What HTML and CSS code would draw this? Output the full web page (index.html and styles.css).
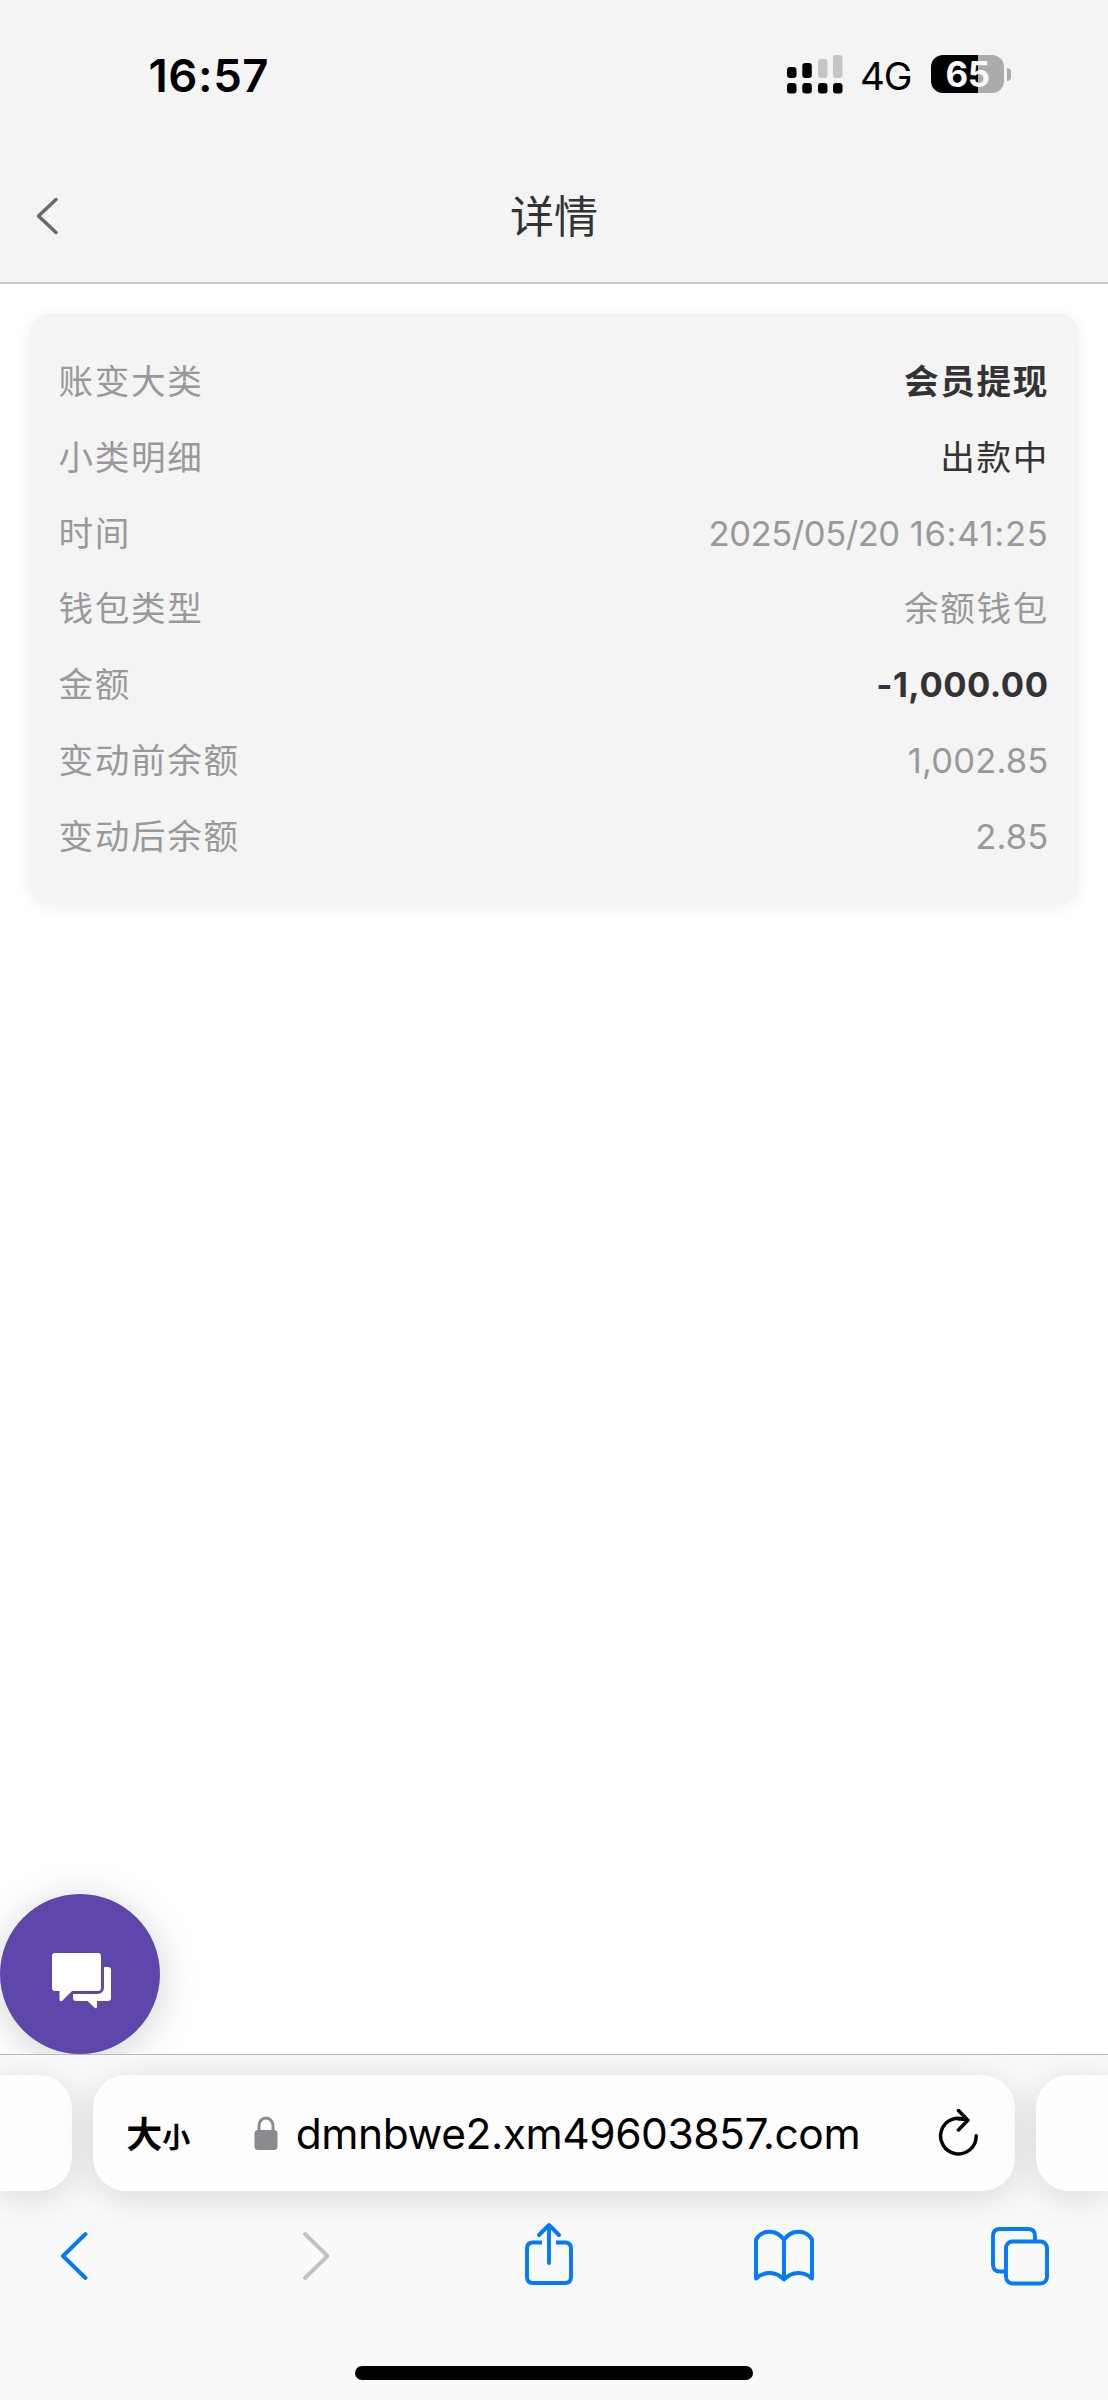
FILE: index.html
```html
<!DOCTYPE html>
<html lang="zh-CN">
<head>
<meta charset="utf-8">
<title>详情</title>
<link rel="stylesheet" href="styles.css">
</head>
<body>
<div class="status">
  <span class="time">16:57</span>
  <div class="status-right">
    <svg class="signal" width="58" height="40" viewBox="0 0 58 40">
      <g fill="#c5c5c5"><rect x="32" y="5" width="9.5" height="19" rx="3"/><rect x="47" y="1" width="9.5" height="23" rx="3"/></g>
      <rect x="1" y="13" width="9.5" height="11" rx="3"/><rect x="16.3" y="9" width="9.5" height="15" rx="3"/>
      <rect x="1" y="29" width="9.5" height="10.5" rx="3"/><rect x="16.3" y="29" width="9.5" height="10.5" rx="3"/><rect x="32" y="29" width="9.5" height="10.5" rx="3"/><rect x="47" y="29" width="9.5" height="10.5" rx="3"/>
    </svg>
    <span class="net">4G</span>
    <div class="battery">65</div>
    <div class="nub"></div>
  </div>
</div>
<header class="nav">
  <svg class="nav-back" width="24" height="38" viewBox="0 0 24 38"><path d="M21 2.500 3.500 19 21 35.500" fill="none" stroke="#6a6a6a" stroke-width="3.500" stroke-linecap="round" stroke-linejoin="round"/></svg>
  <h1>详情</h1>
</header>
<main>
  <dl class="card">
    <div class="row"><dt>账变大类</dt><dd class="dark bold">会员提现</dd></div>
    <div class="row"><dt>小类明细</dt><dd class="dark">出款中</dd></div>
    <div class="row"><dt>时间</dt><dd class="num"><span class="date">2025/05/20</span> <span class="clock">16:41:25</span></dd></div>
    <div class="row"><dt>钱包类型</dt><dd>余额钱包</dd></div>
    <div class="row"><dt>金额</dt><dd class="num dark bold">-1,000.00</dd></div>
    <div class="row"><dt>变动前余额</dt><dd class="num">1,002.85</dd></div>
    <div class="row"><dt>变动后余额</dt><dd class="num">2.85</dd></div>
  </dl>
  <div class="chat">
    <svg width="60" height="56" viewBox="0 0 60 56" fill="#fff"><path d="M4 0h43q3 0 3 3v32q0 3-3 3H21L11.500 47.500Q9 49 8.500 47V38H4q-3 0-3-3V3q0-3 3-3z"/><path d="M54 14h3q3 0 3 3v28q0 3-3 3H46v6q-.5 2-2 1l-7.500-7H25q-3 0-3-3v-4h24q7 0 7-7V15q0-1 1-1z"/></svg>
  </div>
</main>
<footer class="browser">
  <div class="tabs">
    <div class="pill side"></div>
    <div class="pill address">
      <span class="size"><span class="big">大</span><span class="small">小</span></span>
      <svg class="lock" width="24" height="34" viewBox="0 0 24 34"><path d="M5 16V9.500a7 7.500 0 0 1 14 0V16" fill="none" stroke="#8b8a8f" stroke-width="3"/><rect x=".5" y="14" width="23" height="20" rx="3.500" fill="#8b8a8f"/></svg>
      <span class="url">dmnbwe2.xm49603857.com</span>
      <svg class="reload" width="42" height="50" viewBox="0 0 42 50" fill="none" stroke="#000" stroke-width="3.500" stroke-linecap="round" stroke-linejoin="round"><path d="M38.200 28.800A17.800 17.800 0 1 1 29 13.500M20.700 12Q25 11.700 30 13.300M20.500 3.500 29.800 13.300 20.500 23"/></svg>
    </div>
    <div class="pill side"></div>
  </div>
  <div class="tools">
    <svg width="28" height="64" viewBox="0 0 28 64"><path d="M25.500 12 3 34l22.500 22" class="line"/></svg>
    <svg width="28" height="64" viewBox="0 0 28 64"><path d="M3 12l22.500 22L3 56" class="line off"/></svg>
    <svg width="50" height="64" viewBox="0 0 50 64"><path d="M18 20.500H9q-6 0-6 6V55q0 6 6 6h32q6 0 6-6V26.500q0-6-6-6h-9" class="line butt"/><path d="M25 41V3.500M15 13 25 3l10 10" class="line"/></svg>
    <svg width="62" height="64" viewBox="0 0 62 64"><path d="M31 56V18C24 7 9 7 3 17.500V56.500C11 49 23 49 31 57.500 39 49 51 49 59 56.500V17.500C53 7 38 7 31 18" class="line"/></svg>
    <svg width="60" height="64" viewBox="0 0 60 64"><path d="M15 49.500H10q-7 0-7-7V14q0-7 7-7h28q7 0 7 7v5.500" class="line butt"/><rect x="16" y="19.500" width="41" height="42" rx="6.500" class="line"/></svg>
  </div>
  <div class="home"></div>
</footer>
</body>
</html>
```
FILE: styles.css
```css
* { box-sizing: border-box; }
body {
  margin: 0;
  width: 1108px;
  height: 2400px;
  display: flex;
  flex-direction: column;
  overflow: hidden;
  background: #fff;
  font-family: "Inter", "Noto Sans CJK SC", sans-serif;
}
svg { display: block; flex: none; }

.status {
  height: 150px;
  padding: 0 97px 0 148.500px;
  display: flex;
  justify-content: space-between;
  align-items: flex-start;
  background: #f4f4f4;
}
.time { margin-top: 48px; font-size: 45.500px; line-height: 55px; font-weight: 600; letter-spacing: 0.6px; }
.status-right { display: flex; align-items: center; height: 38px; margin-top: 55px; }
.net { margin-left: 16px; width: 71px; font-size: 38.500px; letter-spacing: -1.2px; line-height: 38px; padding-top: 3px; }
.battery {
  width: 73px;
  height: 38px;
  border-radius: 12px;
  background: linear-gradient(90deg, #000 64.5%, #ababab 64.5%);
  color: #f8f8f8;
  font-size: 35px;
  font-weight: 700;
  line-height: 39px;
  text-align: center;
  letter-spacing: -0.6px;
}
.nub { width: 4px; height: 13px; margin-left: 3px; border-radius: 0 5px 5px 0; background: #ababab; }

.nav {
  height: 134px;
  flex: none;
  display: grid;
  grid-template-columns: 1fr auto 1fr;
  align-items: start;
  padding: 0 35px;
  background: #f4f4f4;
  border-bottom: 2.500px solid #ccc;
}
.nav-back { margin-top: 47px; }
.nav h1 { margin: 37px 0 0; font-size: 44px; line-height: 60px; font-weight: 400; color: #333; }

main { flex: 1; padding: 29px 29px 0; position: relative; }
.card {
  margin: 0;
  height: 592px;
  padding: 30px 30px 0 29.500px;
  border-radius: 22px;
  background: #f4f4f4;
  box-shadow: 0 3px 16px rgba(0, 0, 0, .06);
  font-size: 34.600px;
  letter-spacing: 1.700px;
  color: #999;
}
.row { display: flex; justify-content: space-between; height: 75.800px; line-height: 76px; }
.row dd { margin: 0; }
.row .num { letter-spacing: 0.150px; margin-right: 0.500px; }
.row .num.bold { letter-spacing: 0.500px; }
.date { letter-spacing: -0.450px; }
.clock { letter-spacing: 0.700px; }
.row .dark { color: #333; }
.row .bold { font-weight: 700; }

.chat {
  position: absolute;
  left: 0;
  bottom: 0;
  width: 160px;
  height: 160px;
  padding: 58.500px 0 0 51px;
  border-radius: 50%;
  background: #5f46aa;
  box-shadow: 0 6px 40px rgba(0, 0, 0, .18);
}

.browser {
  position: relative;
  height: 346px;
  flex: none;
  overflow: hidden;
  background: #fafafa;
  border-top: 1px solid #b9b9b9;
}
.tabs { display: flex; gap: 21.500px; margin-top: 20px; height: 116px; }
.pill { background: #fefefe; border-radius: 33px; box-shadow: 0 6px 38px rgba(0, 0, 0, .14); }
.side { flex: 1; }
.side:first-child { border-radius: 0 33px 33px 0; }
.side:last-child { border-radius: 33px 0 0 33px; }
.address { width: 921.500px; display: flex; align-items: center; padding: 0 35px 0 33px; }
.size { display: flex; align-items: baseline; width: 128px; margin-bottom: 2px; font-family: "Noto Sans CJK SC", sans-serif; font-weight: 700; }
.big { font-size: 36px; }
.small { font-size: 28px; }
.url { margin-left: 17.500px; font-size: 42.500px; letter-spacing: -0.450px; white-space: nowrap; flex: 1; }
.reload { margin-bottom: 3px; }

.tools { display: grid; grid-template-columns: 242px 222px 229px 237px 60px; height: 64px; margin: 31px 0 0 60px; }
.line { fill: none; stroke: #007aff; stroke-width: 3.900; stroke-linecap: round; stroke-linejoin: round; }
.butt { stroke-linecap: butt; }
.off { stroke: #c2c2c2; }
.home { width: 398px; height: 14px; margin: 79.500px auto 0; border-radius: 7px; background: #000; }
```
